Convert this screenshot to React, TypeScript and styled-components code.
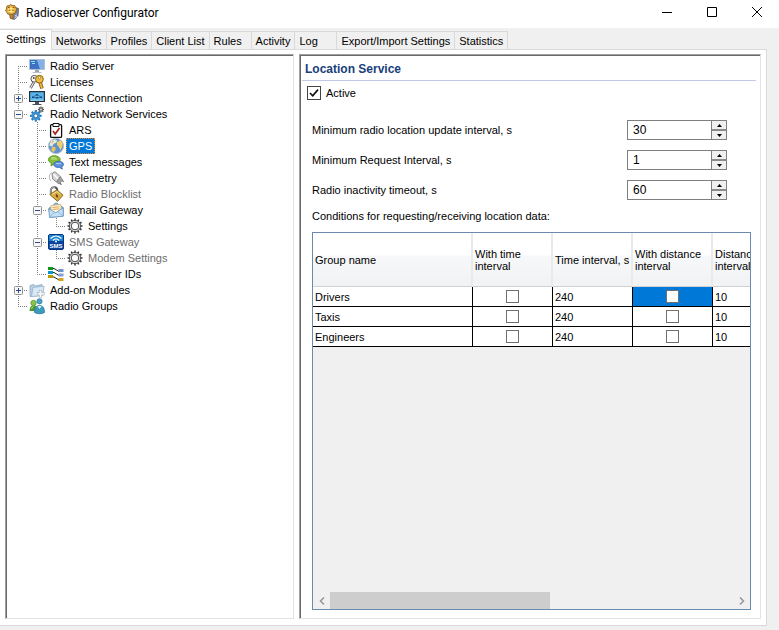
import React, { useState } from "react";
import styled, { createGlobalStyle, css } from "styled-components";

const GlobalStyle = createGlobalStyle`
  * { box-sizing: border-box; }
  body {
    margin: 0;
    background: #f0f0f0;
    color: #000;
    font-family: "Liberation Sans", Arial, sans-serif;
    font-size: 11px;
    line-height: 16px;
  }
  button, input { font: inherit; color: inherit; margin: 0; padding: 0; }
`;

/* ---------- window frame ---------- */

const Window = styled.div`
  display: flex;
  flex-direction: column;
  min-height: 100vh;
  overflow: hidden;
`;

const TitleBar = styled.header`
  display: flex;
  align-items: center;
  height: 28px;
  padding: 0 0 4px 4px;
  background: #fff;
`;

const AppTitle = styled.h1`
  flex: 1;
  margin: 2px 0 0 6px;
  font: 400 12px/16px Roboto, "Open Sans", sans-serif;
`;

const CaptionButton = styled.button`
  display: grid;
  place-items: center;
  width: 45px;
  height: 24px;
  border: 0;
  background: transparent;
`;

const TabStrip = styled.nav`
  display: flex;
  align-items: flex-end;
  height: 21px;
`;

const Tab = styled.button<{ $active?: boolean }>`
  min-width: 42px;
  height: 18px;
  padding: 1px 4px 0;
  border: 1px solid #d9d9d9;
  border-width: 1px 1px 0 0;
  background: #f0f0f0;
  line-height: 16px;
  text-align: left;
  white-space: nowrap;
  ${(p) =>
    p.$active &&
    css`
      z-index: 1;
      height: 21px;
      margin-bottom: -1px;
      padding: 0 5px 2px 6px;
      background: #fff;
    `}
`;

const Page = styled.main`
  flex: 1;
  display: flex;
  gap: 5px;
  margin: 0 12px 4px 0;
  padding: 4px 5px 6px;
  border: 1px solid #d9d9d9;
  border-left: 0;
  background: #fff;
`;

const panelFrame = css`
  border: 1px solid;
  border-color: #a0a0a0 #e3e3e3 #e3e3e3 #a0a0a0;
  box-shadow: inset 1px 1px 0 #696969;
  background: #fff;
`;

/* ---------- tree ---------- */

const Tree = styled.ul`
  ${panelFrame}
  flex: 0 0 289px;
  margin: 0;
  padding: 3px 0 0 2px;
  list-style: none;
`;

const TreeRow = styled.li`
  display: flex;
  align-items: center;
  height: 16px;
  white-space: nowrap;
`;

const dotsDown = "repeating-linear-gradient(180deg, #808080 0 1px, transparent 1px 2px)";
const dotsAcross = "repeating-linear-gradient(90deg, #808080 0 1px, transparent 1px 2px)";

type GuideKind = "none" | "line" | "tee" | "end" | "start";

const guides: Record<GuideKind, string> = {
  none: "none",
  line: `${dotsDown} 10px 0 / 1px 16px no-repeat`,
  tee: `${dotsDown} 10px 0 / 1px 16px no-repeat, ${dotsAcross} 10px 8px / 9px 1px no-repeat`,
  end: `${dotsDown} 10px 0 / 1px 8px no-repeat, ${dotsAcross} 10px 8px / 9px 1px no-repeat`,
  start: `${dotsDown} 10px 8px / 1px 8px no-repeat, ${dotsAcross} 10px 8px / 9px 1px no-repeat`,
};

const Guide = styled.span<{ $kind: GuideKind }>`
  display: flex;
  align-items: center;
  flex: 0 0 19px;
  height: 16px;
  padding: 1px 0 0 6px;
  background: ${(p) => guides[p.$kind]};
`;

const Expander = styled.button`
  display: block;
  width: 9px;
  height: 9px;
  border: 0;
  background: #fff;
  svg { display: block; }
`;

const IconSlot = styled.span`
  flex: 0 0 16px;
  height: 16px;
  margin: 0 2px;
  svg { display: block; overflow: visible; }
`;

const NodeLabel = styled.span<{ $muted?: boolean; $selected?: boolean }>`
  height: 16px;
  padding: 0 3px;
  font-size: 11px;
  line-height: 16px;
  color: ${(p) => (p.$selected ? "#fff" : p.$muted ? "#6d6d6d" : "#000")};
  ${(p) =>
    p.$selected &&
    css`
      background: #0078d7;
      outline: 1px dotted #e88b2e;
      outline-offset: -1px;
    `}
`;

/* ---------- details ---------- */

const Details = styled.section`
  ${panelFrame}
  flex: 1;
  min-width: 0;
  display: flex;
  flex-direction: column;
  padding: 1px 0 0 1px;
`;

const SectionTitle = styled.h2`
  margin: 0 4px 0 1px;
  height: 25px;
  padding: 1px 3px 0;
  border-bottom: 1px solid #c3c8e4;
  color: #17407c;
  font-size: 12px;
  font-weight: 700;
  line-height: 24px;
`;

const CheckRow = styled.label`
  display: flex;
  align-items: center;
  gap: 5px;
  height: 24px;
  padding-left: 6px;
`;

const Tick = styled.input.attrs({ type: "checkbox" })<{ $large?: boolean }>`
  appearance: none;
  display: block;
  width: ${(p) => (p.$large ? 14 : 13)}px;
  height: ${(p) => (p.$large ? 14 : 13)}px;
  border: 1px solid ${(p) => (p.$large ? "#444" : "#707070")};
  background: #fff;
  &:checked {
    background: #fff
      url("data:image/svg+xml,%3Csvg xmlns='http://www.w3.org/2000/svg' viewBox='0 0 12 12'%3E%3Cpath d='M2 6l2.7 2.8L10 2.6' fill='none' stroke='%23111' stroke-width='1.7'/%3E%3C/svg%3E")
      center / 12px 12px no-repeat;
  }
`;

const Fields = styled.div`
  display: grid;
  gap: 10px;
  margin: 15px 33px 0 11px;
`;

const Field = styled.div`
  display: flex;
  align-items: center;
  justify-content: space-between;
  height: 20px;
`;

const Spinner = styled.div`
  display: flex;
  width: 100px;
  height: 20px;
  border: 1px solid #7f7f7f;
  background: #fff;
`;

const NumberBox = styled.input`
  flex: 1;
  min-width: 0;
  padding-left: 5px;
  border: 0;
  outline: 0;
  background: transparent;
  font-size: 12px;
`;

const Steps = styled.div`
  display: grid;
  grid-template-rows: 1fr 1fr;
  gap: 2px;
  width: 15px;
  border-left: 1px solid #7f7f7f;
  background: #8a8a8a;
`;

const Step = styled.button`
  display: grid;
  place-items: center;
  border: 0;
  background: #f0f0f0;
  svg { display: block; }
`;

const Caption = styled.p`
  margin: 0 0 0 11px;
  line-height: 32px;
`;

const Grid = styled.div`
  flex: 1;
  display: flex;
  flex-direction: column;
  justify-content: space-between;
  margin: 0 9px 8px 11px;
  border: 1px solid #6a8ab0;
  background: #f0f0f0;
  overflow: hidden;
`;

const GridView = styled.div`
  overflow: hidden;
`;

const Table = styled.table`
  width: 480px;
  table-layout: fixed;
  border-collapse: separate;
  border-spacing: 0;
  background: #fff;
`;

const HeadCell = styled.th<{ $wide?: boolean }>`
  width: ${(p) => (p.$wide ? 160 : 80)}px;
  height: 54px;
  padding: 0 0 0 2px;
  border-right: 2px solid #e9eaec;
  border-bottom: 1px solid #d0d1d3;
  background: linear-gradient(#fff 0 42%, #f7f8fa 43%, #f1f2f4);
  font-weight: 400;
  line-height: 12px;
  text-align: left;
`;

const Cell = styled.td<{ $selected?: boolean }>`
  height: 20px;
  padding: 0 2px;
  border-right: 1px solid #000;
  border-bottom: 1px solid #000;
  background: ${(p) => (p.$selected ? "#0078d7" : "#fff")};
  line-height: 16px;
  input { margin: 0 auto; }
`;

const ScrollBar = styled.div`
  display: flex;
  align-items: stretch;
  height: 17px;
`;

const ScrollArrow = styled.button`
  display: grid;
  place-items: center;
  width: 17px;
  border: 0;
  background: transparent;
`;

const ScrollTrack = styled.div`
  flex: 1;
`;

const ScrollThumb = styled.div`
  width: calc(100% * 6 / 11);
  height: 17px;
  background: #cdcdcd;
`;

/* ---------- icons ---------- */

const Icon = ({ children, size = 16 }: { children: React.ReactNode; size?: number }) => (
  <svg width={size} height={size} viewBox="0 0 16 16" fill="none" aria-hidden="true">
    {children}
  </svg>
);

const AppIcon = () => (
  <Icon>
    <path d="M10 3l4.5 1.5-.5 7-3.6 4-4.4-2z" fill="#7d83a8" stroke="#4a4e6c" strokeWidth=".8" />
    <path d="M11 12l2-1.5M10.5 14l2.500-2" stroke="#d7dbf0" />
    <path d="M3 2l2-.2L6.5.6l2 .9 2.2.1 1 2 1.100 1.500-.9 2-.3 2-2 .6-1.600 1.200-1.900-.8-2.200.1-.9-1.800L1.600 7l.8-2z" fill="#e9b23c" stroke="#8a5a12" strokeWidth=".9" />
    <path d="M4 5h6M4.500 7.500h5M7 3v6.500" stroke="#fff0a0" />
    <path d="M4 3.400h1.500M8.800 3.400h1.500M5.300 6.200h1M8.500 6.200h1" stroke="#7b4b0c" />
    <path d="M5.500 10.500l1 4 2.500.6v-5z" fill="#c98b25" stroke="#7c5418" strokeWidth=".7" />
  </Icon>
);

const ServerIcon = () => (
  <Icon>
    <path d="M.5 1.500h15v10H.5z" fill="#6f9edb" stroke="#aebfd4" />
    <path d="M1 2h7l3 9H1z" fill="#3c71c4" />
    <path d="M8 2h7v9h-4z" fill="#86b1e6" />
    <path d="M2 3.500h4M3 5.500h3" stroke="#8fe0ff" />
    <path d="M6 12h4v2H6z" fill="#9aa4b0" />
    <path d="M3.500 14.500h9" stroke="#b9c2cc" />
  </Icon>
);

const KeysIcon = () => (
  <Icon>
    <path d="M5 8l-3.500 6" stroke="#555" strokeWidth="2.600" />
    <path d="M5 8l-3.500 6" stroke="#e5e5e5" strokeWidth="1.200" />
    <circle cx="5.300" cy="4.800" r="3.400" fill="#f4f4f4" stroke="#555" />
    <circle cx="4.800" cy="4" r="1" fill="#555" />
    <path d="M11 8l2 6.500" stroke="#7c5a10" strokeWidth="3.600" />
    <path d="M11 8l2 6.500" stroke="#ecb53a" strokeWidth="2" />
    <circle cx="10.400" cy="5.200" r="3.900" fill="#f2bd41" stroke="#8a6414" />
    <circle cx="10.500" cy="3.800" r="1.100" fill="#fff" stroke="#8a6414" strokeWidth=".6" />
  </Icon>
);

const ClientsIcon = () => (
  <Icon>
    <path d="M.6 1.600h14.800v9.800H.6z" fill="#56b4ea" stroke="#27313b" strokeWidth="1.200" />
    <path d="M1.500 10.200h13" stroke="#a6dcf8" />
    <path d="M3.500 7.500L8 4.500l4.500 3M3.500 7.500h9" stroke="#265b8c" strokeWidth=".7" />
    <path d="M3 6.500h1.500V8H3zM7.200 4h1.600v1.500H7.200zM11.500 6.500H13V8h-1.500zM7.200 7h1.600v1.500H7.200z" fill="#123d6b" />
    <path d="M6 12h4v2H6z" fill="#4a535d" />
    <path d="M3.500 14.500h9" stroke="#4a535d" />
  </Icon>
);

const Teeth = ({ cx, cy, r, color, width }: { cx: number; cy: number; r: number; color: string; width: number }) => (
  <>
    {[0, 45, 90, 135].map((a) => (
      <path key={a} d={`M${cx - r} ${cy}H${cx + r}`} stroke={color} strokeWidth={width} transform={`rotate(${a} ${cx} ${cy})`} />
    ))}
  </>
);

const ServicesIcon = () => (
  <Icon>
    <Teeth cx={12} cy={3.5} r={3} color="#4a4a4a" width={1.2} />
    <circle cx="12" cy="3.500" r="2.100" fill="#666" />
    <circle cx="12" cy="3.500" r=".9" fill="#e8e8e8" />
    <Teeth cx={6.8} cy={9.8} r={5.8} color="#2779ba" width={2.2} />
    <circle cx="6.800" cy="9.800" r="4.300" fill="#3b93d3" />
    <circle cx="6.800" cy="9.800" r="1.900" fill="#fff" stroke="#1d639d" strokeWidth=".7" />
  </Icon>
);

const ArsIcon = () => (
  <Icon>
    <rect x="2.600" y="2.600" width="11" height="12.800" rx="1" fill="#fff" stroke="#111" strokeWidth="1.300" />
    <path d="M5 1.500h6v3H5z" fill="#fff" stroke="#111" />
    <path d="M5 9l2.200 3 4.300-6" stroke="#a3241e" strokeWidth="1.700" />
  </Icon>
);

const GlobeIcon = () => (
  <Icon>
    <circle cx="8" cy="8" r="7.600" fill="#5a93d6" stroke="#b5bdc9" />
    <path d="M3 2.800l3.800-1.600 2.400 1.300-1 2.200-2.400 1.100L4 8.500 1.200 7.400z" fill="#e7ead9" />
    <path d="M4.300 8.200l3.400 1.200-.4 2.800-2 2.400-2.100-2.800z" fill="#e6c35c" />
    <path d="M9.200 4l3-1.800 2.500 3-.3 3.300-2 3.800-1.600-3.500-2-2z" fill="#f0cf69" />
    <path d="M3.500 4.600l2.200-1.500" stroke="#d4a93a" />
  </Icon>
);

const MessagesIcon = () => (
  <Icon>
    <path d="M6.200 1.700c3.400 0 6 1.700 6 4s-2.600 4-5.800 4L3 12l.3-3C1.600 8.300.4 7.200.4 5.700c0-2.300 2.500-4 5.800-4z" fill="#82bf34" stroke="#4e8a1c" strokeWidth=".8" />
    <path d="M3 5h6M3.500 3.700h4" stroke="#c5e78d" />
    <path d="M10.600 7.300c2.800 0 4.900 1.300 4.900 3.100 0 1.100-.7 1.900-1.800 2.400l.6 2.400-2.600-1.700c-3.300.3-6-.9-6-3.100 0-1.800 2.100-3.100 4.900-3.100z" fill="#5b8fdb" stroke="#3564ab" strokeWidth=".8" />
    <path d="M8 9.700h5" stroke="#b9d5f8" />
  </Icon>
);

const PlugIcon = () => (
  <Icon>
    <path d="M3 11c-2.500-3-2-7 .7-8.200" stroke="#b0b0b0" />
    <path d="M4 3.500l3-1.800 5.500 5-4 5.300-3.800-3z" fill="#d5d5d5" stroke="#8c8c8c" />
    <path d="M5.500 4.300l4.500 4.500" stroke="#fff" strokeWidth="1.500" />
    <path d="M12.500 6.700l2 3.300-3.500 4-2.500-2z" fill="#a3a3a3" stroke="#777" strokeWidth=".8" />
    <path d="M14 10.500l1.800 1.300M11.800 13l1.700 1.800" stroke="#777" strokeWidth="1.300" />
  </Icon>
);

const LockIcon = () => (
  <Icon>
    <path d="M2.800 8.300V4.600C3 1.800 5 .9 6.900 1.200 8.800 1.500 9.400 3 9.300 5" stroke="#555" strokeWidth="1.900" />
    <path d="M2.800 8V4.600C3 2 5 1 6.900 1.300" stroke="#ddd" strokeWidth=".7" />
    <path d="M1.800 8.500L9 3.800l6 5.500-5.500 6z" fill="#d8ab43" stroke="#8b641b" />
    <path d="M4 8.600L8.900 5.500l3.600 3.200" stroke="#f8e194" />
    <path d="M8.300 8.300l1.300 3" stroke="#5f4210" strokeWidth="1.700" />
  </Icon>
);

const MailIcon = () => (
  <Icon>
    <path d="M.8 6.500L8 .8l7.200 4.700v8.500L2 15.400z" fill="#84b6e3" stroke="#6c93bb" />
    <path d="M3 3.500l10-1v8L3 12z" fill="#fff6dc" stroke="#d6b26d" strokeWidth=".8" />
    <path d="M4.500 5.500l7-.7M4.500 7.500l7-.7" stroke="#e5a550" />
    <path d="M.8 6.800l7 4 7.400-5v8.500L1.500 15.400z" fill="#c4e2f7" stroke="#6c93bb" strokeWidth=".8" />
    <path d="M1.500 15l5.500-5M15 14l-5.500-4.500" stroke="#7fabd4" strokeWidth=".8" />
  </Icon>
);

const GearIcon = () => (
  <Icon>
    {[0, 30, 60, 90, 120, 150].map((a) => (
      <path key={a} d="M.5 8h15" stroke="#333" strokeWidth="1.500" transform={`rotate(${a} 8 8)`} />
    ))}
    <circle cx="8" cy="8" r="5.600" fill="#eee" stroke="#555" />
    <circle cx="8" cy="8" r="3.800" fill="#fff" stroke="#444" />
  </Icon>
);

const SmsIcon = () => (
  <Icon>
    <rect x=".5" y=".5" width="15" height="15" rx="1.500" fill="#07439f" stroke="#07357e" />
    <path d="M1 1h14v6H1z" fill="#1782cf" />
    <path d="M2.500 4.500c3.300-3.300 7.700-3.300 11 0M4.800 6.500c2-1.900 4.400-1.900 6.400 0" stroke="#fff" strokeWidth="1.200" />
    <circle cx="8" cy="7.600" r="1" fill="#fff" />
    <text x="8" y="14" textAnchor="middle" fill="#fff" fontFamily="Liberation Sans, sans-serif" fontWeight="700" fontSize="6">SMS</text>
  </Icon>
);

const SubscribersIcon = () => (
  <Icon>
    <path d="M4 2.500h2l5 3M4 6.500h2l5 3M4 11h2l5 3" stroke="#222" />
    <path d="M0 1h5v3H0z" fill="#109619" />
    <path d="M0 5h5v3H0z" fill="#0795cc" />
    <path d="M0 9h5v3H0z" fill="#b99b00" />
    <path d="M10.500 3h5v3h-5z" fill="#6f91cd" />
    <path d="M10.500 7.500h5v3h-5z" fill="#829edb" />
    <path d="M10.500 12h5v3h-5z" fill="#d0a51d" />
  </Icon>
);

const FolderIcon = () => (
  <Icon>
    <path d="M1 14.500V3.500l4-1 1.500 1.500L13 2.500v11z" fill="#b8cfe4" stroke="#8da9c3" strokeWidth=".8" />
    <path d="M2.500 14.500L4 5.500l11-1.500-1 9.500z" fill="#d9e8f5" stroke="#9ab4cc" strokeWidth=".8" />
    <path d="M11.500 8v7.500M8 11.700h7.500" stroke="#9cabb8" strokeWidth="3.200" />
    <path d="M11.500 8.500v6.500M8.500 11.700h6.500" stroke="#f4f6f8" strokeWidth="2" />
  </Icon>
);

const GroupsIcon = () => (
  <Icon>
    <path d="M.6 13c0-4 1.400-5.500 4-5.500S9 9 9 13z" fill="#4e9c2c" />
    <circle cx="4.500" cy="5" r="2.700" fill="#86c64c" stroke="#4e8c2b" strokeWidth=".7" />
    <circle cx="10.500" cy="3.300" r="2.600" fill="#4aa5c8" stroke="#2b6f96" strokeWidth=".7" />
    <path d="M5.500 14.500c0-5 1.800-7 5-7s5 2 5 7c-2.500 1.700-7.500 1.700-10 0z" fill="#3c9cc0" stroke="#266d91" strokeWidth=".7" />
    <path d="M8.500 8l2 3 2.200-3" fill="#e2f4fa" />
    <path d="M2.500 10.500l1.500-2" stroke="#c4eb9b" />
  </Icon>
);

const ExpandMark = ({ open }: { open: boolean }) => (
  <svg width="9" height="9" viewBox="0 0 9 9" aria-hidden="true">
    <rect x=".5" y=".5" width="8" height="8" rx="1" fill="#f8f8f8" stroke="#919191" />
    <path d={open ? "M2 4.500h5" : "M2 4.500h5M4.500 2v5"} stroke="#2b4b93" />
  </svg>
);

/* ---------- data ---------- */

interface TreeNode {
  label: string;
  icon: React.ComponentType;
  guides: GuideKind[];
  open?: boolean;
  muted?: boolean;
}

const nodes: TreeNode[] = [
  { label: "Radio Server", icon: ServerIcon, guides: ["start"] },
  { label: "Licenses", icon: KeysIcon, guides: ["tee"] },
  { label: "Clients Connection", icon: ClientsIcon, guides: ["tee"], open: false },
  { label: "Radio Network Services", icon: ServicesIcon, guides: ["tee"], open: true },
  { label: "ARS", icon: ArsIcon, guides: ["line", "tee"] },
  { label: "GPS", icon: GlobeIcon, guides: ["line", "tee"] },
  { label: "Text messages", icon: MessagesIcon, guides: ["line", "tee"] },
  { label: "Telemetry", icon: PlugIcon, guides: ["line", "tee"] },
  { label: "Radio Blocklist", icon: LockIcon, guides: ["line", "tee"], muted: true },
  { label: "Email Gateway", icon: MailIcon, guides: ["line", "tee"], open: true },
  { label: "Settings", icon: GearIcon, guides: ["line", "line", "end"] },
  { label: "SMS Gateway", icon: SmsIcon, guides: ["line", "tee"], open: true, muted: true },
  { label: "Modem Settings", icon: GearIcon, guides: ["line", "line", "end"], muted: true },
  { label: "Subscriber IDs", icon: SubscribersIcon, guides: ["line", "end"] },
  { label: "Add-on Modules", icon: FolderIcon, guides: ["tee"], open: false },
  { label: "Radio Groups", icon: GroupsIcon, guides: ["end"] },
];

const tabs = ["Settings", "Networks", "Profiles", "Client List", "Rules", "Activity", "Log", "Export/Import Settings", "Statistics"];

const fields = [
  { id: "update", label: "Minimum radio location update interval, s", value: 30 },
  { id: "request", label: "Minimum Request Interval, s", value: 1 },
  { id: "timeout", label: "Radio inactivity timeout, s", value: 60 },
];

const groups = ["Drivers", "Taxis", "Engineers"];

/* ---------- components ---------- */

function NumericField({ id, label, value }: { id: string; label: string; value: number }) {
  const [n, setN] = useState(value);
  return (
    <Field>
      <label htmlFor={id}>{label}</label>
      <Spinner>
        <NumberBox id={id} inputMode="numeric" value={n} onChange={(e) => setN(Number(e.target.value) || 0)} />
        <Steps>
          <Step aria-label={`Increase ${label}`} onClick={() => setN(n + 1)}>
            <svg width="5" height="3" viewBox="0 0 5 3"><path d="M2.500 0L5 3H0z" /></svg>
          </Step>
          <Step aria-label={`Decrease ${label}`} onClick={() => setN(n - 1)}>
            <svg width="5" height="3" viewBox="0 0 5 3"><path d="M0 0h5L2.500 3z" /></svg>
          </Step>
        </Steps>
      </Spinner>
    </Field>
  );
}

export default function App() {
  const [selected, setSelected] = useState("GPS");
  return (
    <Window>
      <GlobalStyle />
      <TitleBar>
        <AppIcon />
        <AppTitle>Radioserver Configurator</AppTitle>
        <CaptionButton aria-label="Minimize">
          <svg width="10" height="10" viewBox="0 0 10 10"><path d="M0 5.500h10" stroke="#000" /></svg>
        </CaptionButton>
        <CaptionButton aria-label="Maximize">
          <svg width="10" height="10" viewBox="0 0 10 10"><path d="M.5.5h9v9h-9z" fill="none" stroke="#000" /></svg>
        </CaptionButton>
        <CaptionButton aria-label="Close">
          <svg width="10" height="10" viewBox="0 0 10 10"><path d="M0 0l10 10M10 0L0 10" stroke="#000" /></svg>
        </CaptionButton>
      </TitleBar>
      <TabStrip>
        {tabs.map((t, i) => (
          <Tab key={t} $active={i === 0}>{t}</Tab>
        ))}
      </TabStrip>
      <Page>
        <Tree role="tree">
          {nodes.map((node, i) => {
            const NodeIcon = node.icon;
            const last = node.guides.length - 1;
            return (
              <TreeRow key={i} role="treeitem" aria-selected={node.label === selected} onClick={() => setSelected(node.label)}>
                {node.guides.map((g, k) => (
                  <Guide key={k} $kind={g}>
                    {k === last && node.open !== undefined && (
                      <Expander aria-label={node.open ? "Collapse" : "Expand"}>
                        <ExpandMark open={node.open} />
                      </Expander>
                    )}
                  </Guide>
                ))}
                <IconSlot><NodeIcon /></IconSlot>
                <NodeLabel $muted={node.muted} $selected={node.label === selected}>{node.label}</NodeLabel>
              </TreeRow>
            );
          })}
        </Tree>
        <Details>
          <SectionTitle>Location Service</SectionTitle>
          <CheckRow>
            <Tick $large defaultChecked />
            Active
          </CheckRow>
          <Fields>
            {fields.map((f) => (
              <NumericField key={f.id} {...f} />
            ))}
          </Fields>
          <Caption>Conditions for requesting/receiving location data:</Caption>
          <Grid>
            <GridView>
              <Table>
                <thead>
                  <tr>
                    <HeadCell $wide>Group name</HeadCell>
                    <HeadCell>With time interval</HeadCell>
                    <HeadCell>Time interval, s</HeadCell>
                    <HeadCell>With distance interval</HeadCell>
                    <HeadCell>Distance interval, m</HeadCell>
                  </tr>
                </thead>
                <tbody>
                  {groups.map((g, i) => (
                    <tr key={g}>
                      <Cell>{g}</Cell>
                      <Cell><Tick aria-label={`${g}: with time interval`} /></Cell>
                      <Cell>240</Cell>
                      <Cell $selected={i === 0}><Tick aria-label={`${g}: with distance interval`} /></Cell>
                      <Cell>10</Cell>
                    </tr>
                  ))}
                </tbody>
              </Table>
            </GridView>
            <ScrollBar>
              <ScrollArrow aria-label="Scroll left">
                <svg width="6" height="8" viewBox="0 0 6 8" fill="none"><path d="M5 .5L1.500 4 5 7.500" stroke="#969696" strokeWidth="1.500" /></svg>
              </ScrollArrow>
              <ScrollTrack><ScrollThumb /></ScrollTrack>
              <ScrollArrow aria-label="Scroll right">
                <svg width="6" height="8" viewBox="0 0 6 8" fill="none"><path d="M1 .5L4.500 4 1 7.500" stroke="#969696" strokeWidth="1.500" /></svg>
              </ScrollArrow>
            </ScrollBar>
          </Grid>
        </Details>
      </Page>
    </Window>
  );
}
